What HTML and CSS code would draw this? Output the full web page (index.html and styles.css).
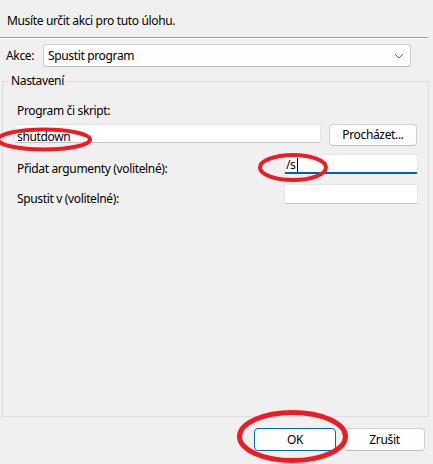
FILE: index.html
```html
<!DOCTYPE html>
<html lang="cs">
<head>
    <meta charset="UTF-8">
    <meta name="viewport" content="width=device-width, initial-scale=1.0">
    <title>Akce úlohy</title>
    <link rel="stylesheet" href="styles.css">
</head>
<body>

    <div class="dialog">
        <p class="prompt">Musíte určit akci pro tuto úlohu.</p>
        <hr class="divider">

        <div class="action-row">
            <label class="action-label">Akce:</label>
            <div class="combo">
                <span>Spustit program</span>
                <svg class="chevron" width="10" height="6" viewBox="0 0 10 6">
                    <path d="M1 1 L5 5 L9 1" fill="none" stroke="#5f5f5f" stroke-width="1"/>
                </svg>
            </div>
        </div>

        <fieldset class="group">
            <legend>Nastavení</legend>

            <label class="field-label">Program či skript:</label>
            <div class="program-row">
                <div class="edit edit-program">shutdown</div>
                <button class="btn btn-browse">Procházet...</button>
            </div>

            <div class="arg-row">
                <label class="field-label">Přidat argumenty (volitelné):</label>
                <div class="edit edit-focus">/s<span class="caret"></span></div>
            </div>

            <div class="arg-row arg-row-last">
                <label class="field-label">Spustit v (volitelné):</label>
                <div class="edit"></div>
            </div>
        </fieldset>

        <div class="footer">
            <button class="btn btn-ok">OK</button>
            <button class="btn btn-cancel">Zrušit</button>
        </div>

        <!-- ručně nakreslená červená zvýraznění -->
        <svg class="marks" width="433" height="464" viewBox="0 0 433 464">
            <ellipse cx="44" cy="139.5" rx="46" ry="10" fill="none" stroke="#ed1c24" stroke-width="4"/>
            <ellipse cx="293" cy="167.5" rx="33" ry="12.5" fill="none" stroke="#ed1c24" stroke-width="4"/>
            <ellipse cx="292.5" cy="436.5" rx="53" ry="24" fill="none" stroke="#ed1c24" stroke-width="5"/>
        </svg>
    </div>

</body>
</html>
```

FILE: styles.css
```css
:root {
    --bg: #f0f0f0;
    --text: #000;
    --border: #e0e0e0;
    --accent: #005fb8;
    --red: #ed1c24;
}

* {
    margin: 0;
    padding: 0;
    box-sizing: border-box;
    font-family: "Noto Sans", "Open Sans", sans-serif;
}

body {
    background: var(--bg);
    color: var(--text);
    font-size: 12px;
    letter-spacing: -0.35px;
}

.dialog {
    position: relative;
    width: 433px;
    height: 464px;
    background: var(--bg);
    overflow: hidden;
}

.prompt {
    height: 37px;
    padding: 13px 7px 0;
    line-height: 16px;
}

.divider {
    height: 0;
    margin-right: 5px;
    border: none;
    border-top: 1px solid #a0a0a0;
    border-bottom: 1px solid #fff;
}

.action-row {
    display: flex;
    align-items: center;
    margin-top: 5px;
    padding-left: 6px;
}

.action-label {
    width: 37px;
    line-height: 16px;
}

.combo {
    display: flex;
    align-items: center;
    justify-content: space-between;
    width: 368px;
    height: 23px;
    padding: 0 4px 0 4px;
    background: #fdfdfd;
    border: 1px solid #cfcfcf;
    border-bottom-color: #bcbcbc;
    border-radius: 3px;
}

.chevron {
    margin-right: 2px;
}

.group {
    margin: 6px 4px 0 2px;
    height: 344px;
    padding: 14px 10px 0 11px;
    border: 1px solid #dcdcdc;
}

.group legend {
    margin-left: -5px;
    padding: 0 2px;
    line-height: 16px;
}

.field-label {
    display: block;
    padding-left: 3px;
    line-height: 16px;
}

.program-row {
    display: flex;
    align-items: flex-start;
    gap: 7px;
    margin-top: 5px;
}

.edit {
    height: 20px;
    padding-left: 2px;
    background: #fff;
    border: 1px solid #e5e5e5;
    border-bottom-color: #c4c4c4;
    border-radius: 2px;
    line-height: 18px;
    white-space: nowrap;
}

.edit-program {
    width: 307px;
    height: 19px;
    line-height: 23px;
}

.edit-focus {
    border-bottom: 2px solid var(--accent);
    padding-left: 1px;
    line-height: 20px;
}

.caret {
    display: inline-block;
    width: 1px;
    height: 14px;
    margin-left: 1px;
    vertical-align: -3px;
    background: #000;
}

.btn {
    height: 23px;
    background: #fdfdfd;
    border: 1px solid #d0d0d0;
    border-bottom-color: #c0c0c0;
    border-radius: 4px;
    color: var(--text);
    font-size: 12px;
    letter-spacing: inherit;
    line-height: 20px;
}

.btn-browse {
    width: 88px;
    height: 22px;
    margin-left: auto;
    margin-right: 1px;
}

.arg-row {
    display: flex;
    align-items: flex-start;
    justify-content: space-between;
    margin-top: 8px;
}

.arg-row .field-label {
    margin-top: 7px;
}

.arg-row .edit {
    width: 134px;
}

.arg-row-last {
    margin-top: 7px;
}

.footer {
    display: flex;
    justify-content: flex-end;
    gap: 8px;
    margin-top: 11px;
    padding-right: 8px;
}

.btn-ok {
    width: 82px;
    border-color: #0067c0;
}

.btn-cancel {
    width: 81px;
}

.marks {
    position: absolute;
    top: 0;
    left: 0;
    pointer-events: none;
}
```
